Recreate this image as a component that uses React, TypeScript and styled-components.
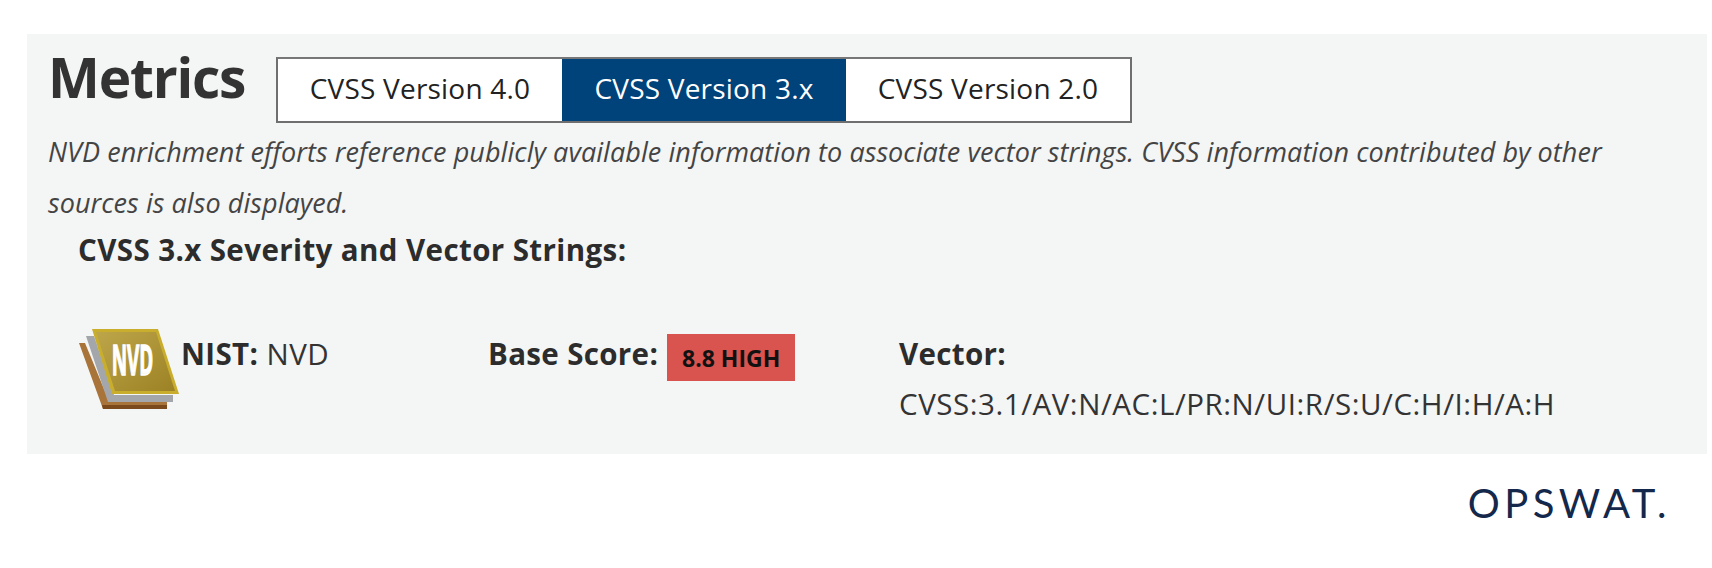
import React from "react";
import styled, { createGlobalStyle } from "styled-components";

const Global = createGlobalStyle`
  html, body { margin: 0; padding: 0; background: #fff; }
  body { font-family: "Open Sans", "Noto Sans", sans-serif; color: #333; }
`;
const Page = styled.div`
  width: 1712px; height: 568px; overflow: hidden; box-sizing: border-box;
  padding: 34px 5px 0 27px; display: flex; flex-direction: column;
`;
const Panel = styled.section`
  height: 420px; box-sizing: border-box; background: #f4f5f5;
  padding: 23px 0 0 21px; display: flex; flex-direction: column;
`;
const HeadRow = styled.div`display: flex; align-items: flex-start;`;
const Title = styled.h2`
  margin: -14px 0 0 0; width: 228px; font-size: 55px; line-height: 68px; font-weight: 700;
  color: #333; letter-spacing: -1.2px; height: 80px;
`;
const Tabs = styled.div`
  display: flex; height: 66px; box-sizing: border-box; border: 2px solid #6f6f6f; border-top-color:#777;
  background: #fff;
`;
const Tab = styled.div<{ $active?: boolean }>`
  width: 284px; display: flex; align-items: center; justify-content: center; padding-bottom: 5px; box-sizing: border-box;
  font-size: 28px; letter-spacing: 0.2px; color: ${p => p.$active ? "#fff" : "#222"};
  background: ${p => p.$active ? "#00427a" : "#fff"};
`;
const Note = styled.p`
  margin: 3px 0 0 0; font-size: 27px; line-height: 51px; font-style: italic; color: #444;
  letter-spacing: 0.06px; width: 1600px;
`;
const SubHead = styled.h3`
  margin: 1px 0 0 30px; font-size: 29.5px; line-height: 42px; font-weight: 700; color: #2c2c2c; letter-spacing: 0.4px;
`;
const Metrics = styled.div`display: flex; margin-top: 58px; align-items: flex-start;`;
const NistCell = styled.div`display: flex; width: 409px; margin-left: 31px; align-items: flex-start;`;
const Icon = styled.svg`width: 102px; height: 82px; flex: none;`;
const Line = styled.div`font-size: 29.5px; line-height: 50px; color: #333; letter-spacing: 0.55px; white-space: nowrap;`;
const Strong = styled.strong`font-weight: 700; color: #2c2c2c; letter-spacing: 0.35px;`;
const ScoreCell = styled.div`display: flex; width: 411px; align-items: flex-start;`;
const Badge = styled.span`
  margin: 5px 0 0 9px; width: 128px; height: 47px; background: #d9534f; color: #111;
  display: flex; align-items: center; justify-content: center;
  font-size: 23px; font-weight: 700;
`;
const VectorCell = styled.div`display: flex; flex-direction: column;`;
const Logo = styled.div`
  align-self: flex-end; margin: 26px 36px 0 0; font-family: Lato, sans-serif; font-weight: 400;
  font-size: 40px; line-height: 46px; letter-spacing: 4.5px; color: #14284b;
`;

export default function App() {
  return (
    <Page>
      <Global />
      <Panel>
        <HeadRow>
          <Title>Metrics</Title>
          <Tabs>
            <Tab>CVSS Version 4.0</Tab>
            <Tab $active>CVSS Version 3.x</Tab>
            <Tab>CVSS Version 2.0</Tab>
          </Tabs>
        </HeadRow>
        <Note>NVD enrichment efforts reference publicly available information to associate vector strings. CVSS information contributed by other sources is also displayed.</Note>
        <SubHead>CVSS 3.x Severity and Vector Strings:</SubHead>
        <Metrics>
          <NistCell>
            <Icon viewBox="0 0 102 82">
              <defs>
                <linearGradient id="gold" x1="0" y1="0" x2="1" y2="1">
                  <stop offset="0" stopColor="#bda54a" />
                  <stop offset="1" stopColor="#9c8224" />
                </linearGradient>
                <linearGradient id="nvdText" x1="0" y1="0" x2="0" y2="1">
                  <stop offset="0" stopColor="#f2eed8" />
                  <stop offset="0.3" stopColor="#ffffff" />
                  <stop offset="0.7" stopColor="#ffffff" />
                  <stop offset="1" stopColor="#e4dcae" />
                </linearGradient>
              </defs>
              <polygon points="0,14 6,14 30,72 88,72 88,80 24,80" fill="#a9743a" />
              <polygon points="23,76 88,76 88,80 24,80" fill="#7a4a1c" />
              <polygon points="7,7 15,7 35,66 94,66 94,73 29,73" fill="#a3a7ab" />
              <polygon points="13,0 79,0 100,65 33,65" fill="#c9ae2e" />
              <polygon points="17,3 77,3 96,62 36,62" fill="url(#gold)" />
              <text transform="translate(53.5 46) scale(0.45 1)" textAnchor="middle" fontFamily="'Open Sans',sans-serif" fontWeight="700" fontSize="42" fill="url(#nvdText)" stroke="#ffffff" strokeWidth="1.4">NVD</text>
            </Icon>
            <Line><Strong>NIST:</Strong> NVD</Line>
          </NistCell>
          <ScoreCell>
            <Line><Strong>Base Score:</Strong></Line>
            <Badge>8.8 HIGH</Badge>
          </ScoreCell>
          <VectorCell>
            <Line><Strong>Vector:</Strong></Line>
            <Line>CVSS:3.1/AV:N/AC:L/PR:N/UI:R/S:U/C:H/I:H/A:H</Line>
          </VectorCell>
        </Metrics>
      </Panel>
      <Logo>OPSWAT.</Logo>
    </Page>
  );
}
